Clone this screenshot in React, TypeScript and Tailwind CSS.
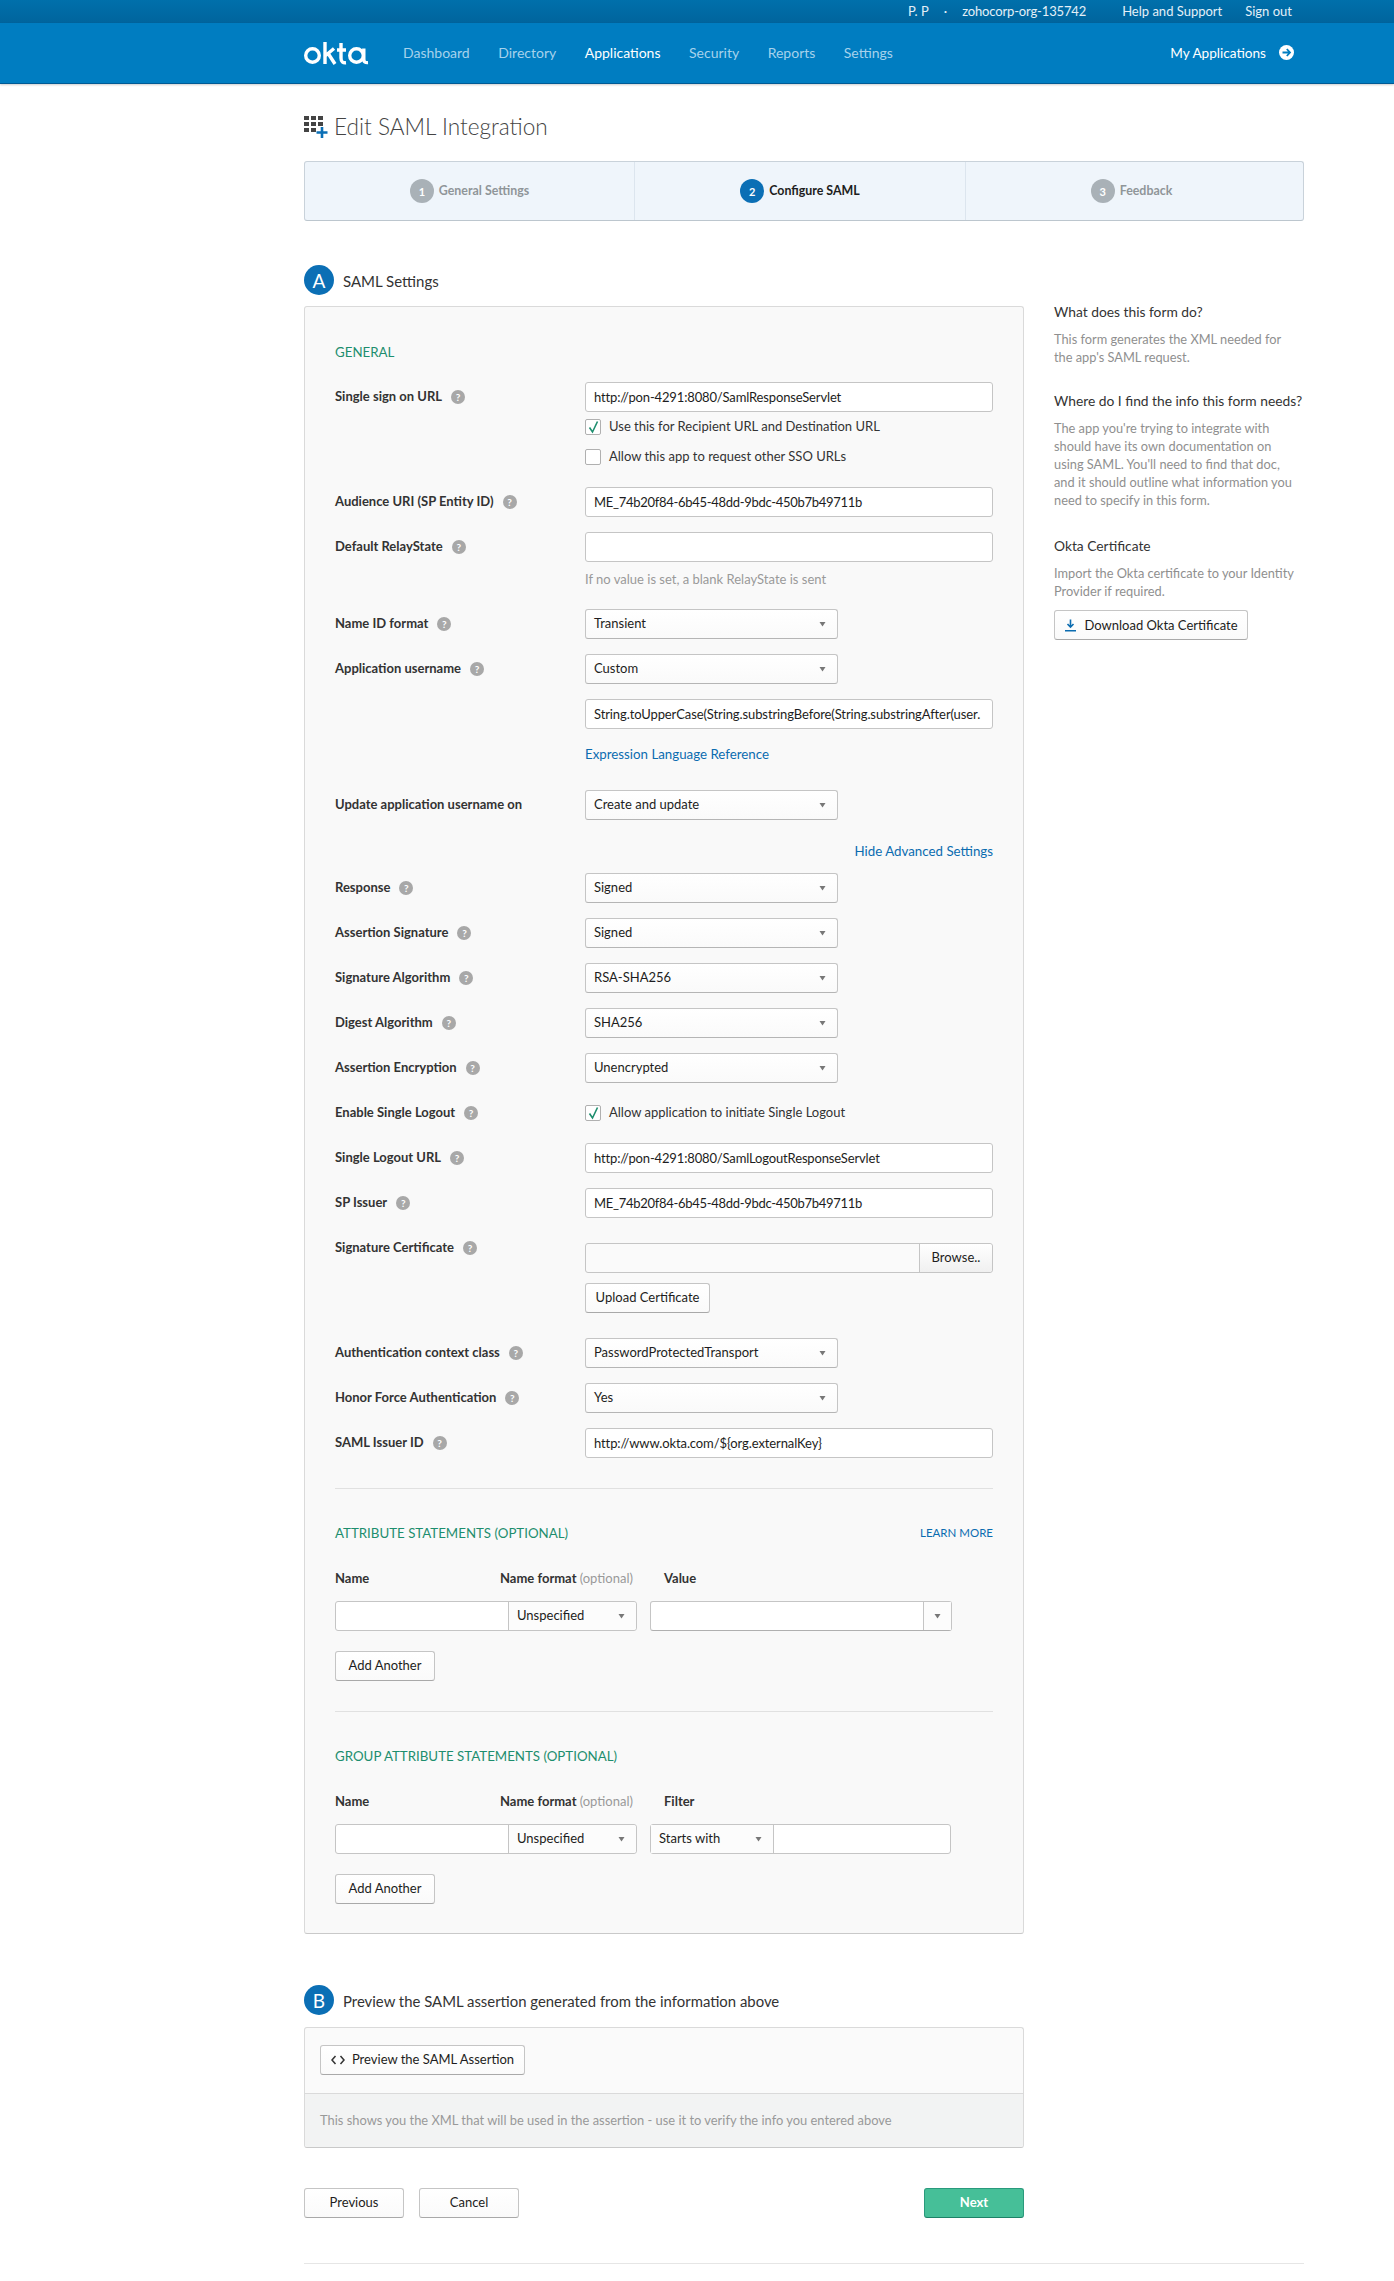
import type { ReactNode } from 'react';

const NAV = [
  { label: 'Dashboard', active: false },
  { label: 'Directory', active: false },
  { label: 'Applications', active: true },
  { label: 'Security', active: false },
  { label: 'Reports', active: false },
  { label: 'Settings', active: false },
];

function Help() {
  return (
    <span className="ml-[9px] flex h-[14px] w-[14px] items-center justify-center rounded-full bg-[#a8a8a8] text-[10px] leading-none font-bold text-white">
      ?
    </span>
  );
}

function Caret() {
  return (
    <svg width="7" height="6" viewBox="0 0 7 6" className="shrink-0">
      <polygon points="0.5,1 6.5,1 3.5,5.5" fill="#777777" />
    </svg>
  );
}

function Select({ value, className = 'w-[253px]' }: { value: string; className?: string }) {
  return (
    <div className={`flex h-[30px] items-center justify-between rounded-[3px] border border-[#c5c5c5] border-b-[#b5b5b5] bg-gradient-to-b from-white to-[#fafafa] pr-[11px] pl-[8px] text-[#1d1d21] ${className}`}>
      <span>{value}</span>
      <Caret />
    </div>
  );
}

function TextInput({ value = '', className = '' }: { value?: string; className?: string }) {
  return (
    <input
      readOnly
      value={value}
      className={`h-[30px] w-[408px] rounded-[3px] border border-[#c5c5c5] bg-white px-[8px] text-[#1d1d21] outline-none ${className}`}
    />
  );
}

function Btn({ children, className = '' }: { children: ReactNode; className?: string }) {
  return (
    <button className={`flex h-[30px] items-center justify-center rounded-[3px] border border-[#c5c5c5] border-b-[#a9a9a9] bg-gradient-to-b from-white to-[#fafafa] text-[#1d1d21] ${className}`}>
      {children}
    </button>
  );
}

function Row({ label, help = true, children, className = 'mb-[15px]' }: { label: string; help?: boolean; children: ReactNode; className?: string }) {
  return (
    <div className={`flex ${className}`}>
      <div className="flex h-[30px] w-[250px] shrink-0 items-center font-bold text-[#333333]">
        {label}
        {help && <Help />}
      </div>
      <div>{children}</div>
    </div>
  );
}

function Check({ checked, label, className = '' }: { checked: boolean; label: string; className?: string }) {
  return (
    <div className={`flex h-[16px] items-center ${className}`}>
      <span className="mr-[8px] flex h-[16px] w-[16px] items-center justify-center rounded-[2px] border border-[#b0b0b0] bg-white">
        {checked && (
          <svg width="13" height="14" viewBox="0 0 13 14" fill="none">
            <path d="M2.5 7.5 L5.5 12 L10.5 1.5" stroke="#1d8e6e" strokeWidth="1.6" />
          </svg>
        )}
      </span>
      <span className="text-[#333333]">{label}</span>
    </div>
  );
}

function Badge({ letter }: { letter: string }) {
  return (
    <span className="flex h-[30px] w-[30px] items-center justify-center rounded-full bg-[#0b6fb5] text-[19px] leading-none text-white">
      {letter}
    </span>
  );
}

function Step({ n, label, active = false, className }: { n: number; label: string; active?: boolean; className: string }) {
  return (
    <div className={`flex items-center justify-center border-r border-[#dce5ee] last:border-r-0 ${className}`}>
      <span className={`mr-[5px] flex h-[24px] w-[24px] items-center justify-center rounded-full text-[11px] leading-none font-bold text-white ${active ? 'bg-[#0b6fb5]' : 'bg-[#a9b1b7]'}`}>
        {n}
      </span>
      <span className={`text-[12.4px] font-bold ${active ? 'text-[#1d1d21]' : 'text-[#8f9599]'}`}>{label}</span>
    </div>
  );
}

function AttrHeader({ third }: { third: string }) {
  return (
    <div className="mb-[12px] flex h-[20px] items-center font-bold text-[#333333]">
      <span className="w-[165px]">Name</span>
      <span className="w-[164px] whitespace-nowrap">
        Name format <span className="font-normal text-[#999999]">(optional)</span>
      </span>
      <span>{third}</span>
    </div>
  );
}

function SectionTitle({ children }: { children: ReactNode }) {
  return <span className="text-[13.3px] leading-[20px] text-[#1d8e6e]">{children}</span>;
}

function NameCombo() {
  return (
    <div className="flex h-[30px] w-[302px] rounded-[3px] border border-[#c5c5c5] bg-white">
      <div className="w-[172px]" />
      <div className="flex flex-1 items-center justify-between rounded-r-[3px] border-l border-[#c5c5c5] bg-[#fcfcfc] pr-[11px] pl-[8px] text-[#1d1d21]">
        <span>Unspecified</span>
        <Caret />
      </div>
    </div>
  );
}

function OktaLogo() {
  return (
    <svg width="66" height="24" viewBox="0 0 66 24" fill="none" stroke="white" strokeWidth="3.4" aria-label="okta">
      <circle cx="8.5" cy="14.5" r="6.8" />
      <path d="M21 1 V23 M21 15 L30 7.5 M24.5 13 L31 23" />
      <path d="M37 2 V17 C37 21 39 22 42 21.7 M33 9 H42" />
      <circle cx="52.5" cy="14.5" r="6.8" />
      <path d="M59.8 7.5 V18 C59.8 21 61 21.8 64 21.6" />
    </svg>
  );
}

function GridPlus() {
  return (
    <svg width="24" height="22" viewBox="0 0 24 22" className="mr-[6px]">
      <g fill="#444444">
        <rect x="0" y="0" width="5" height="4" />
        <rect x="7" y="0" width="5" height="4" />
        <rect x="14" y="0" width="5" height="4" />
        <rect x="0" y="6" width="5" height="4" />
        <rect x="7" y="6" width="5" height="4" />
        <rect x="14" y="6" width="5" height="4" />
        <rect x="0" y="12" width="5" height="4" />
        <rect x="7" y="12" width="5" height="4" />
      </g>
      <path d="M18 11 V22 M12.5 16.5 H23.5" stroke="#0b6fb5" strokeWidth="2.6" />
    </svg>
  );
}

export default function App() {
  return (
    <div className="min-h-[2281px] bg-white font-['Lato','Open_Sans',sans-serif] text-[13px] text-[#333333]">
      {/* top strip */}
      <div className="flex h-[23px] items-center justify-end bg-gradient-to-b from-[#0070ab] to-[#00649d] pr-[102px] text-[13px] text-[#e4f0f8]">
        <span>P. P</span>
        <span className="mx-[15px]">·</span>
        <span className="tracking-[-0.15px]">zohocorp-org-135742</span>
        <span className="ml-[36px]">Help and Support</span>
        <span className="ml-[23px]">Sign out</span>
      </div>

      {/* nav */}
      <div className="flex h-[61px] items-center justify-between border-b border-[#005a94] bg-[#007dc1] pr-[100px] pl-[304px] shadow-[0_1px_2px_rgba(0,0,0,0.2)]">
        <div className="flex items-center">
          <OktaLogo />
          <nav className="mt-[-2px] ml-[33px] flex gap-[28.5px] text-[14px]">
            {NAV.map((item) => (
              <span key={item.label} className={item.active ? 'text-white' : 'text-[#a6d2ec]'}>
                {item.label}
              </span>
            ))}
          </nav>
        </div>
        <div className="flex items-center text-[13.6px] text-white">
          <span>My Applications</span>
          <span className="ml-[13px] flex h-[15px] w-[15px] items-center justify-center rounded-full bg-white">
            <svg width="11" height="11" viewBox="0 0 11 11" fill="none" stroke="#007dc1" strokeWidth="1.8">
              <path d="M1.5 5.5 H9 M5.8 2 L9 5.5 L5.8 9" />
            </svg>
          </span>
        </div>
      </div>

      <main className="ml-[304px] w-[1000px]">
        <div className="mt-[32px] flex h-[22px] items-center text-[22.6px] font-light text-[#444444]">
          <GridPlus />
          <h1 className="mt-[-1px]">Edit SAML Integration</h1>
        </div>

        <div className="mt-[23px] flex h-[60px] rounded-[3px] border border-[#c9d2da] border-b-[#bcc6ce] bg-[#eff5fb]">
          <Step n={1} label="General Settings" className="w-[330px]" />
          <Step n={2} label="Configure SAML" active className="w-[331px]" />
          <Step n={3} label="Feedback" className="flex-1 pr-[6px]" />
        </div>

        <div className="mt-[44px] flex items-start">
          <div className="w-[720px] shrink-0">
            <div className="flex h-[30px] items-center">
              <Badge letter="A" />
              <h2 className="mt-[2px] ml-[9px] text-[15px] text-[#333333]">SAML Settings</h2>
            </div>

            <section className="mt-[11px] h-[1628px] rounded-[3px] border border-[#dadada] border-b-[#c9c9c9] bg-[#f9f9f9] px-[30px] pt-[35px]">
              <div className="mb-[20px] h-[20px]">
                <SectionTitle>GENERAL</SectionTitle>
              </div>

              <Row label="Single sign on URL" className="mb-[7px]">
                <TextInput value="http://pon-4291:8080/SamlResponseServlet" className="tracking-[-0.15px]" />
              </Row>
              <div className="ml-[250px]">
                <Check checked label="Use this for Recipient URL and Destination URL" />
                <Check checked={false} label="Allow this app to request other SSO URLs" className="mt-[14px] mb-[22px]" />
              </div>

              <Row label="Audience URI (SP Entity ID)">
                <TextInput value="ME_74b20f84-6b45-48dd-9bdc-450b7b49711b" className="tracking-[-0.29px]" />
              </Row>
              <Row label="Default RelayState" className="mb-[8px]">
                <TextInput />
              </Row>
              <p className="mb-[21px] ml-[250px] h-[18px] leading-[18px] text-[#999999]">If no value is set, a blank RelayState is sent</p>

              <Row label="Name ID format">
                <Select value="Transient" />
              </Row>
              <Row label="Application username">
                <Select value="Custom" />
              </Row>
              <div className="mb-[15px] ml-[250px]">
                <TextInput value="String.toUpperCase(String.substringBefore(String.substringAfter(user." className="tracking-[-0.1px]" />
              </div>
              <a className="ml-[250px] block h-[20px] text-[13.3px] leading-[20px] text-[#0b6cb0]">Expression Language Reference</a>
              <Row label="Update application username on" help={false} className="mt-[26px] mb-[21px]">
                <Select value="Create and update" />
              </Row>
              <div className="mb-[12px] h-[20px] text-right text-[13.3px] leading-[20px] text-[#0b6cb0]">Hide Advanced Settings</div>

              <Row label="Response"><Select value="Signed" /></Row>
              <Row label="Assertion Signature"><Select value="Signed" /></Row>
              <Row label="Signature Algorithm"><Select value="RSA-SHA256" /></Row>
              <Row label="Digest Algorithm"><Select value="SHA256" /></Row>
              <Row label="Assertion Encryption"><Select value="Unencrypted" /></Row>
              <Row label="Enable Single Logout">
                <div className="flex h-[30px] items-center">
                  <Check checked label="Allow application to initiate Single Logout" />
                </div>
              </Row>
              <Row label="Single Logout URL">
                <TextInput value="http://pon-4291:8080/SamlLogoutResponseServlet" className="tracking-[-0.15px]" />
              </Row>
              <Row label="SP Issuer">
                <TextInput value="ME_74b20f84-6b45-48dd-9bdc-450b7b49711b" className="tracking-[-0.29px]" />
              </Row>
              <Row label="Signature Certificate" className="mb-[25px]">
                <div className="mt-[10px]">
                  <div className="flex h-[30px] w-[408px] rounded-[3px] border border-[#c5c5c5] bg-[#fafafa]">
                    <div className="flex-1" />
                    <div className="flex w-[73px] items-center justify-center rounded-r-[3px] border-l border-[#c5c5c5] bg-gradient-to-b from-white to-[#f0f0f0] text-[#1d1d21]">Browse..</div>
                  </div>
                  <Btn className="mt-[10px] w-[125px]">Upload Certificate</Btn>
                </div>
              </Row>
              <Row label="Authentication context class"><Select value="PasswordProtectedTransport" /></Row>
              <Row label="Honor Force Authentication"><Select value="Yes" /></Row>
              <Row label="SAML Issuer ID" className="mb-[30px]">
                <TextInput value="http://www.okta.com/${org.externalKey}" className="tracking-[-0.1px]" />
              </Row>

              <hr className="border-[#e1e1e1]" />

              <div className="mt-[34px] mb-[26px] flex h-[20px] items-center justify-between">
                <SectionTitle>ATTRIBUTE STATEMENTS (OPTIONAL)</SectionTitle>
                <span className="text-[11.5px] leading-[20px] text-[#0b6cb0]">LEARN MORE</span>
              </div>
              <AttrHeader third="Value" />
              <div className="flex gap-[13px]">
                <NameCombo />
                <div className="flex h-[30px] w-[302px] rounded-[3px] border border-[#c5c5c5] border-b-[#b0b0b0] bg-white">
                  <div className="flex-1" />
                  <div className="flex w-[28px] items-center justify-center border-l border-[#c5c5c5] bg-[#fcfcfc]">
                    <Caret />
                  </div>
                </div>
              </div>
              <Btn className="mt-[20px] w-[100px]">Add Another</Btn>

              <hr className="mt-[30px] border-[#e1e1e1]" />

              <div className="mt-[34px] mb-[26px] flex h-[20px] items-center">
                <SectionTitle>GROUP ATTRIBUTE STATEMENTS (OPTIONAL)</SectionTitle>
              </div>
              <AttrHeader third="Filter" />
              <div className="flex gap-[13px]">
                <NameCombo />
                <div className="flex h-[30px] w-[301px] rounded-[3px] border border-[#c5c5c5] bg-white">
                  <div className="flex w-[123px] items-center justify-between border-r border-[#c5c5c5] bg-[#fcfcfc] pr-[11px] pl-[8px] text-[#1d1d21]">
                    <span>Starts with</span>
                    <Caret />
                  </div>
                </div>
              </div>
              <Btn className="mt-[20px] w-[100px]">Add Another</Btn>
            </section>

            <div className="mt-[51px] flex h-[30px] items-center">
              <Badge letter="B" />
              <h2 className="mt-[2px] ml-[9px] text-[14.9px] text-[#333333]">Preview the SAML assertion generated from the information above</h2>
            </div>

            <section className="mt-[12px] rounded-[3px] border border-[#dadada] border-b-[#c9c9c9] bg-[#fafafa]">
              <div className="h-[65px] px-[15px] pt-[17px]">
                <Btn className="w-[205px]">
                  <svg width="14" height="10" viewBox="0 0 14 10" fill="none" stroke="#333333" strokeWidth="1.5" className="mr-[7px]">
                    <path d="M4.5 1 L1 5 L4.5 9 M9.5 1 L13 5 L9.5 9" />
                  </svg>
                  Preview the SAML Assertion
                </Btn>
              </div>
              <div className="flex h-[54px] items-center rounded-b-[3px] border-t border-[#dadada] bg-[#f2f3f3] px-[15px] text-[12.9px] text-[#999999]">
                This shows you the XML that will be used in the assertion - use it to verify the info you entered above
              </div>
            </section>

            <div className="mt-[40px] flex">
              <Btn className="w-[100px]">Previous</Btn>
              <Btn className="ml-[15px] w-[100px]">Cancel</Btn>
              <button className="ml-auto h-[30px] w-[100px] rounded-[3px] border border-[#2a9a7c] border-b-[#1d8268] bg-[#46bf98] font-bold text-white">Next</button>
            </div>
          </div>

          <aside className="ml-[30px] w-[250px] pt-[38px] text-[12.8px] leading-[18px] text-[#8f8f8f]">
            <h3 className="text-[13.8px] text-[#333333]">What does this form do?</h3>
            <p className="mt-[9px] w-[243px]">This form generates the XML needed for the app's SAML request.</p>
            <h3 className="mt-[26px] text-[13.8px] text-[#333333]">Where do I find the info this form needs?</h3>
            <p className="mt-[9px] w-[243px]">The app you're trying to integrate with should have its own documentation on using SAML. You'll need to find that doc, and it should outline what information you need to specify in this form.</p>
            <h3 className="mt-[28px] text-[13.8px] text-[#333333]">Okta Certificate</h3>
            <p className="mt-[9px] w-[243px]">Import the Okta certificate to your Identity Provider if required.</p>
            <Btn className="mt-[10px] w-[194px] text-[13px]">
              <svg width="13" height="13" viewBox="0 0 13 13" fill="none" stroke="#0b6cb0" strokeWidth="1.6" className="mr-[7px]">
                <path d="M6.5 0.5 V8 M3.5 5 L6.5 8.2 L9.5 5 M1 11.8 H12" />
              </svg>
              Download Okta Certificate
            </Btn>
          </aside>
        </div>

        <hr className="mt-[45px] border-[#e6e6e6]" />
      </main>
    </div>
  );
}
